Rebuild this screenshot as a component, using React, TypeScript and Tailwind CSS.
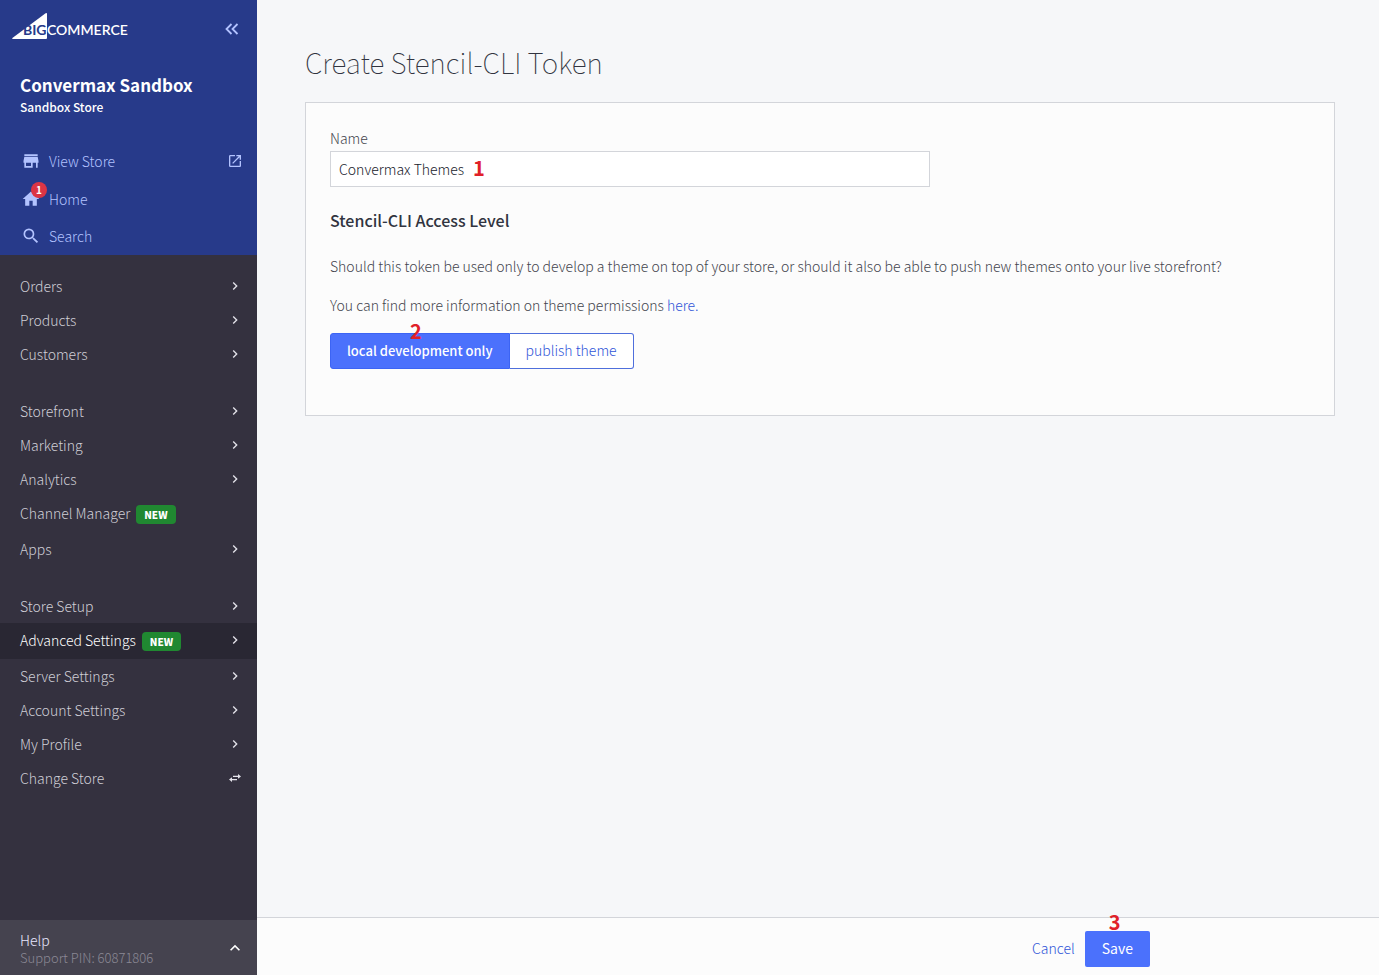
import React, { useState } from "react";
import {
  MdChevronRight,
  MdExpandLess,
  MdHome,
  MdOpenInNew,
  MdSearch,
  MdStore,
} from "react-icons/md";

interface MenuItem {
  label: string;
  isNew?: boolean;
  active?: boolean;
  icon?: "chevron" | "swap";
}

const menuGroups: MenuItem[][] = [
  [
    { label: "Orders", icon: "chevron" },
    { label: "Products", icon: "chevron" },
    { label: "Customers", icon: "chevron" },
  ],
  [
    { label: "Storefront", icon: "chevron" },
    { label: "Marketing", icon: "chevron" },
    { label: "Analytics", icon: "chevron" },
    { label: "Channel Manager", isNew: true },
    { label: "Apps", icon: "chevron" },
  ],
  [
    { label: "Store Setup", icon: "chevron" },
    { label: "Advanced Settings", isNew: true, active: true, icon: "chevron" },
    { label: "Server Settings", icon: "chevron" },
    { label: "Account Settings", icon: "chevron" },
    { label: "My Profile", icon: "chevron" },
    { label: "Change Store", icon: "swap" },
  ],
];

function Logo() {
  return (
    <svg
      className="h-[28px] w-[118px]"
      viewBox="0 0 118 28"
      role="img"
      aria-label="BigCommerce"
    >
      <path
        d="M33.6 1.3 L0.4 26 Q-0.2 27 0.8 27 H34 Q35 27 35 26 V2 Q35 0.4 33.6 1.3 Z"
        fill="#fff"
      />
      <text
        x="11"
        y="23"
        fontFamily="Lato, sans-serif"
        fontSize="14"
        fontWeight="700"
        fill="#273a8a"
      >
        BIG
      </text>
      <text
        x="35"
        y="23"
        fontFamily="Lato, sans-serif"
        fontSize="14"
        fontWeight="600"
        fill="#fff"
      >
        COMMERCE
      </text>
    </svg>
  );
}

function CollapseIcon() {
  return (
    <svg
      className="h-3 w-[14px]"
      viewBox="0 0 14 12"
      fill="none"
      stroke="currentColor"
      strokeWidth={1.8}
    >
      <path d="M6.5 1 L1.5 6 L6.5 11" />
      <path d="M12.5 1 L7.5 6 L12.5 11" />
    </svg>
  );
}

function SwapIcon() {
  return (
    <svg className="h-2 w-3" viewBox="0 0 12 8" fill="currentColor">
      <path d="M4 1.7 H9 V0 L12 2.4 L9 4.8 V3 H4 Z" />
      <path d="M8 5 H3 V3.2 L0 5.6 L3 8 V6.3 H8 Z" />
    </svg>
  );
}

function SidebarItem({ item }: { item: MenuItem }) {
  return (
    <a
      href="#"
      className={`flex items-start justify-between pl-5 pr-4 ${
        item.isNew ? "h-9" : "h-[34px]"
      } ${item.active ? "bg-[#292733] text-white" : "text-[#cfced6]"}`}
    >
      <span className="flex items-start">
        <span className="leading-[34px]">{item.label}</span>
        {item.isNew && (
          <span className="ml-[6px] mt-[9px] flex h-[19px] items-center rounded-[4px] bg-[#208831] px-2 text-[10px] font-black leading-none text-white">
            NEW
          </span>
        )}
      </span>
      <span className="flex h-[34px] w-3 items-center justify-center text-[#e4e3ea]">
        {item.icon === "chevron" && <MdChevronRight className="size-4 shrink-0" />}
        {item.icon === "swap" && <SwapIcon />}
      </span>
    </a>
  );
}

function Sidebar() {
  return (
    <aside className="flex w-[257px] shrink-0 flex-col bg-[#34313f] text-[14px] font-light">
      <div className="flex h-[255px] flex-col bg-[#273a8a] text-[#b3c3ff]">
        <div className="flex items-center justify-between pl-3 pr-[18px] pt-3">
          <a href="#">
            <Logo />
          </a>
          <button type="button" aria-label="Collapse menu" className="mb-[-6px]">
            <CollapseIcon />
          </button>
        </div>

        <div className="pl-5 pt-[33px] text-white">
          <div className="text-[17px] font-bold leading-6">Convermax Sandbox</div>
          <div className="text-[12px] font-medium leading-5">Sandbox Store</div>
        </div>

        <nav className="mt-[25px] flex flex-col">
          <a href="#" className="flex h-[38px] items-center pl-[21px] pr-[14px]">
            <MdStore className="size-5" />
            <span className="ml-2 flex-1">View Store</span>
            <MdOpenInNew className="size-4" />
          </a>
          <a href="#" className="flex h-[38px] items-center pl-[21px] pr-4">
            <span className="relative">
              <MdHome className="size-5" />
              <span className="absolute -top-[7px] left-[10px] flex size-4 items-center justify-center rounded-full bg-[#dc3545] text-[10px] font-bold leading-none text-white">
                1
              </span>
            </span>
            <span className="ml-2">Home</span>
          </a>
          <a href="#" className="flex h-[36px] items-center pl-[21px] pr-4">
            <MdSearch className="size-5" />
            <span className="ml-2">Search</span>
          </a>
        </nav>
      </div>

      <nav className="flex flex-1 flex-col gap-[23px] pt-[14px]">
        {menuGroups.map((group, index) => (
          <div key={index}>
            {group.map((item) => (
              <SidebarItem key={item.label} item={item} />
            ))}
          </div>
        ))}
      </nav>

      <button
        type="button"
        className="flex h-[55px] items-center justify-between bg-[#45434f] pl-5 pr-3 text-left"
      >
        <span>
          <span className="block pt-[2px] leading-[18px] text-[#e8e7ff]">Help</span>
          <span className="block text-[13px] leading-[17px] text-[#8b8995]">
            Support PIN: 60871806
          </span>
        </span>
        <MdExpandLess className="size-5 text-white" />
      </button>
    </aside>
  );
}

function StepNumber({ value, className }: { value: number; className: string }) {
  return (
    <span
      className={`pointer-events-none absolute text-[20px] font-bold leading-5 text-[#e02028] ${className}`}
    >
      {value}
    </span>
  );
}

export default function App() {
  const [name, setName] = useState("Convermax Themes");
  const [access, setAccess] = useState("local");

  return (
    <div className="flex min-h-screen bg-[#f6f7f9] font-['Noto_Sans_CJK_SC',sans-serif] text-[14px] text-[#44454e]">
      <Sidebar />

      <div className="flex min-w-0 flex-1 flex-col font-light">
        <main className="flex-1 pl-12 pr-11 pt-[42px]">
          <h1 className="text-[28px] font-thin leading-10 text-[#313440]">
            Create Stencil-CLI Token
          </h1>

          <form className="mt-5 border border-[#d3d5da] bg-[#fcfcfc] px-6 pb-[46px] pt-6">
            <label htmlFor="token-name" className="mb-[2px] block leading-[22px]">
              Name
            </label>
            <div className="relative max-w-[600px]">
              <input
                id="token-name"
                type="text"
                value={name}
                onChange={(e) => setName(e.target.value)}
                className="block h-9 w-full border border-[#d3d5da] bg-white px-2 text-[#20222c] outline-none"
              />
              <StepNumber value={1} className="left-[143px] top-[7px]" />
            </div>

            <h2 className="mt-[21px] text-[16px] font-medium leading-6 text-[#313440]">
              Stencil-CLI Access Level
            </h2>
            <p className="mt-[22px] leading-6">
              Should this token be used only to develop a theme on top of your
              store, or should it also be able to push new themes onto your live
              storefront?
            </p>
            <p className="mt-[15px] leading-6">
              You can find more information on theme permissions{" "}
              <a href="#" className="text-[#2f55d8]">
                here.
              </a>
            </p>

            <div className="relative mt-4 flex">
              <button
                type="button"
                aria-pressed={access === "local"}
                onClick={() => setAccess("local")}
                className="h-9 rounded-l-[3px] border border-[#3c64f4] bg-[#4b71fc] px-4 text-[13px] font-medium text-white"
              >
                local development only
              </button>
              <button
                type="button"
                aria-pressed={access === "publish"}
                onClick={() => setAccess("publish")}
                className="h-9 rounded-r-[3px] border border-l-0 border-[#4f6fdc] bg-white px-4 pb-[2px] text-[#2f55d8]"
              >
                publish theme
              </button>
              <StepNumber value={2} className="-top-3 left-20" />
            </div>
          </form>
        </main>

        <footer className="flex h-[58px] items-center justify-end border-t border-[#d3d5da] bg-[#fcfcfc] pr-[229px] pt-1">
          <a href="#" className="mr-[10px] text-[#2f55d8]">
            Cancel
          </a>
          <div className="relative">
            <button
              type="submit"
              className="h-9 rounded-[2px] bg-[#4b71fc] px-[17px] font-normal text-white"
            >
              Save
            </button>
            <StepNumber value={3} className="-top-[19px] left-6" />
          </div>
        </footer>
      </div>
    </div>
  );
}
